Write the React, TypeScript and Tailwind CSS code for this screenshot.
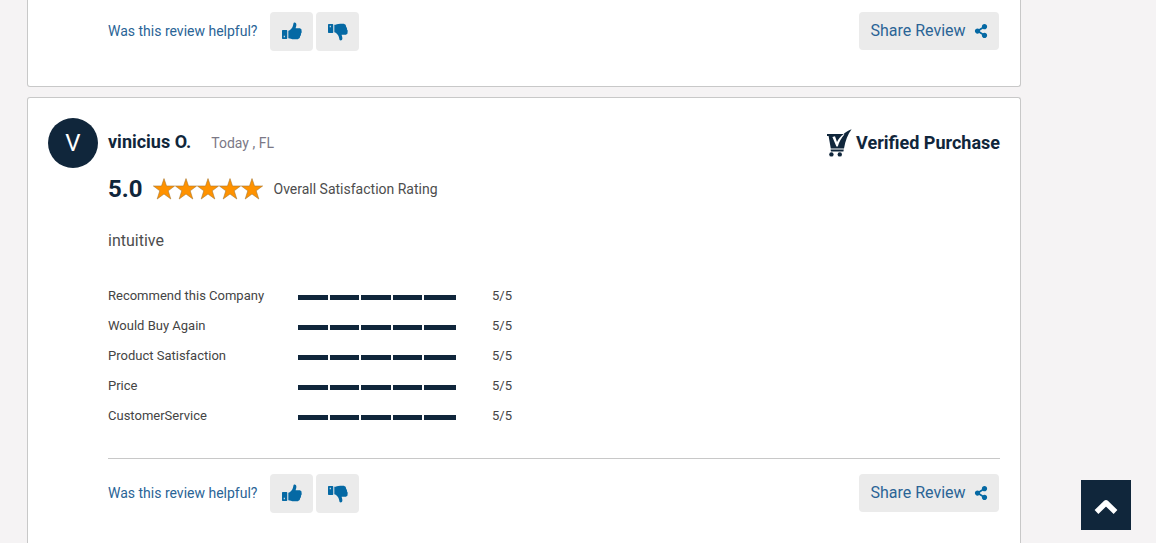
import { FaShareAlt } from "react-icons/fa";

type Score = {
  label: string;
  value: number;
};

const scores: Score[] = [
  { label: "Recommend this Company", value: 5 },
  { label: "Would Buy Again", value: 5 },
  { label: "Product Satisfaction", value: 5 },
  { label: "Price", value: 5 },
  { label: "CustomerService", value: 5 },
];

function Star() {
  return (
    <svg viewBox="0 0 22 22" className="h-[22px] w-[22px]" aria-hidden="true">
      <path
        d="M11 0.6 L13.5 8 H21.6 L15.2 12.8 L17.8 21 L11 16 L4.2 21 L6.8 12.8 L0.4 8 H8.5 Z"
        fill="#ff9200"
        stroke="#a8772f"
        strokeWidth="0.6"
      />
    </svg>
  );
}

function Thumb({ className }: { className: string }) {
  return (
    <svg viewBox="0 0 57 51" className={className} fill="currentColor" aria-hidden="true">
      <path
        fillRule="evenodd"
        d="M2 23 H13 Q15 23 15 25 V46 Q15 48 13 48 H2 Q0 48 0 46 V25 Q0 23 2 23 Z M5 39 V43 H8 V39 Z"
      />
      <path d="M18 25 C23 24 30 17 31 11 L33 3 C36 0 41 2 41 8 C41 12 39 15 39 18 H51 Q57 19 56 26 Q57 30 54 33 Q55 38 52 40 Q52 48 45 49 H35 C27 49 23 46 18 46 Z" />
    </svg>
  );
}

function VerifiedCart() {
  return (
    <svg viewBox="0 0 26 28" className="h-7 w-[26px]" aria-hidden="true">
      <g fill="#10263b">
        <path d="M1 5 H17.6 C19.4 3.4 22.2 1.4 25.6 0.2 C21.8 5.4 19.4 11.5 18 19.4 H4.8 L2.6 7 H1 Z" />
        <path d="M4.6 20.6 H17.8 L17.4 22.4 H5 Z" />
        <circle cx="5.4" cy="25.4" r="2.2" />
        <circle cx="13.8" cy="25.4" r="2.2" />
      </g>
      <path d="M6.4 8 L9 7.2 L11 13 C12.4 10 14.6 7.2 17.8 5 L18.4 5.4 C15.2 9 13 13 11.8 17.4 H10.4 Z" fill="#fff" />
    </svg>
  );
}

function ReviewActions() {
  return (
    <div className="flex items-start justify-between text-[#0569a4]">
      <div className="flex items-center gap-[3px]">
        <span className="mr-[10px] pb-0.5 text-sm text-[#2a6496]">Was this review helpful?</span>
        <button
          type="button"
          aria-label="Helpful"
          className="flex h-[39px] w-[43px] items-center justify-center rounded bg-[#ebebeb]"
        >
          <Thumb className="mb-0.5 h-[18px] w-5" />
        </button>
        <button
          type="button"
          aria-label="Not helpful"
          className="flex h-[39px] w-[43px] items-center justify-center rounded bg-[#ebebeb]"
        >
          <Thumb className="h-[18px] w-5 -scale-y-100" />
        </button>
      </div>
      <button
        type="button"
        className="mr-px flex h-[38px] w-[140px] items-center justify-center gap-2 rounded bg-[#ebebeb] text-base text-[#2a6496]"
      >
        Share Review
        <FaShareAlt className="size-[14px] text-[#0569a4]" />
      </button>
    </div>
  );
}

function ScoreTable() {
  return (
    <table className="mt-7 text-[13px] text-[#444]">
      <tbody>
        {scores.map((score) => (
          <tr key={score.label} className="h-[30px]">
            <th scope="row" className="w-[190px] p-0 text-left font-normal">
              {score.label}
            </th>
            <td className="w-[194px] p-0">
              <div className="mt-[3px] grid w-[158px] grid-cols-5">
                {Array.from({ length: score.value }, (_, i) => (
                  <span key={i} className="h-[5px] border-r-2 border-white bg-[#10263b] last:border-r-0" />
                ))}
              </div>
            </td>
            <td className="p-0">{score.value}/5</td>
          </tr>
        ))}
      </tbody>
    </table>
  );
}

export default function App() {
  return (
    <main className="flex min-h-screen flex-col gap-[10px] bg-[#f5f3f4] pr-[135px] pl-[27px] font-[Roboto,sans-serif]">
      <article className="rounded-b-[3px] border border-t-0 border-[#c8c8c8] bg-white pt-3 pr-5 pb-[35px] pl-20">
        <ReviewActions />
      </article>

      <article className="flex flex-1 items-start gap-[10px] rounded-t-[3px] border border-b-0 border-[#c8c8c8] bg-white px-5 pt-5">
        <div className="flex size-[50px] shrink-0 items-center justify-center rounded-full bg-[#10263b] text-2xl text-white">
          V
        </div>

        <div className="flex-1">
          <header className="flex h-[50px] items-center justify-between">
            <div className="flex items-baseline gap-5 pb-0.5">
              <h2 className="text-lg font-bold text-[#10263b]">vinicius O.</h2>
              <span className="text-sm text-[#7b7886]">Today , FL</span>
            </div>
            <div className="flex items-center gap-1 text-lg font-bold text-[#10263b]">
              <VerifiedCart />
              Verified Purchase
            </div>
          </header>

          <div className="flex h-[42px] items-center">
            <strong className="text-2xl font-bold text-[#10263b]">5.0</strong>
            <div className="ml-[10px] flex" role="img" aria-label="5 out of 5 stars">
              <Star />
              <Star />
              <Star />
              <Star />
              <Star />
            </div>
            <span className="ml-[11px] text-sm text-[#4d4d4d]">Overall Satisfaction Rating</span>
          </div>

          <p className="mt-[19px] text-base text-[#4d4d4d]">intuitive</p>

          <ScoreTable />

          <footer className="mt-[27px] border-t border-[#c8c8c8] pt-[15px]">
            <ReviewActions />
          </footer>
        </div>
      </article>

      <button
        type="button"
        aria-label="Back to top"
        className="fixed right-[25px] bottom-[13px] flex size-[50px] items-center justify-center bg-[#10263b] text-white"
      >
        <svg viewBox="0 0 24 16" className="mt-1 h-4 w-6" aria-hidden="true">
          <path
            d="M2.5 13 L12 3.8 L21.5 13"
            fill="none"
            stroke="currentColor"
            strokeWidth="5.4"
            strokeLinejoin="round"
          />
        </svg>
      </button>
    </main>
  );
}
